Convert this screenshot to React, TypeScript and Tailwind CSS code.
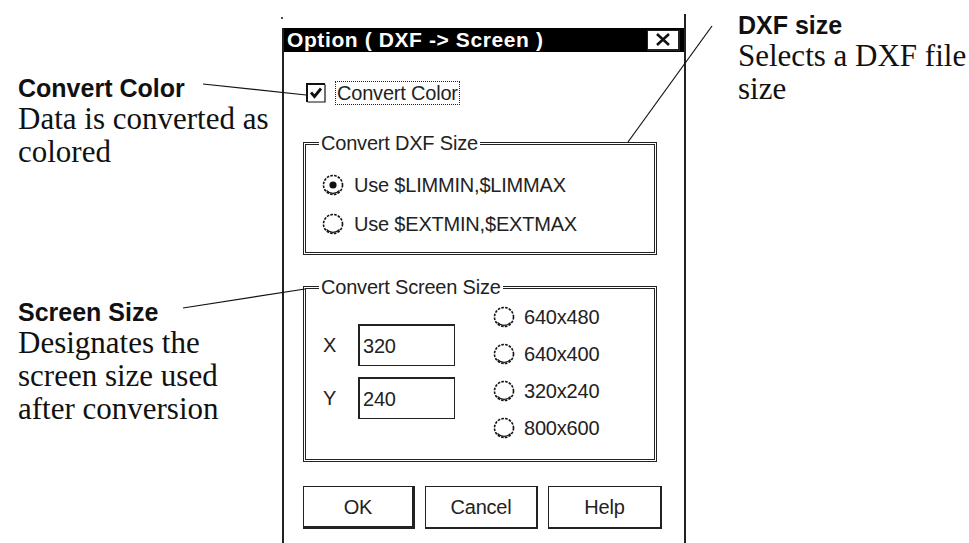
const sans = { fontFamily: '"Liberation Sans", Arial, sans-serif' };
const serif = { fontFamily: '"Liberation Serif", "Times New Roman", serif' };

function Radio({ on = false }: { on?: boolean }) {
  return (
    <svg width="24" height="24" viewBox="0 0 24 24" className="shrink-0">
      <circle cx="12" cy="12" r="9.5" fill="none" stroke="#111" strokeWidth="1.6" strokeDasharray="2.6 1.2" />
      <path d="M5.5 17.5 A9 9 0 0 0 18.5 17.5" fill="none" stroke="#111" strokeWidth="1.2" />
      {on && <circle cx="12" cy="12" r="3.6" fill="#111" />}
    </svg>
  );
}

function Check() {
  return (
    <svg width="20" height="20" viewBox="0 0 20 20" className="shrink-0">
      <path d="M1 19 V1 H19" fill="none" stroke="#111" strokeWidth="2" />
      <path d="M1.5 19 H19 V1.5" fill="none" stroke="#111" strokeWidth="1.2" />
      <path d="M5 9.5 L8.5 13.5 L15 5.5" fill="none" stroke="#111" strokeWidth="2.8" />
    </svg>
  );
}

function Group({ label, className, children }: { label: string; className: string; children: React.ReactNode }) {
  return (
    <div className={`relative border-[3px] border-double border-[#222] ${className}`}>
      <span className="absolute -top-[13px] left-[13px] bg-white px-[2px] text-[20px] leading-[22px] tracking-[-0.2px] text-[#222]">
        {label}
      </span>
      {children}
    </div>
  );
}

function Field({ value }: { value: string }) {
  return (
    <div className="flex h-[42px] w-[97px] items-center border-t-2 border-l-2 border-r border-b border-[#222] pl-[3px] text-[20px]">
      {value}
    </div>
  );
}

function Btn({ label, w, strong = false }: { label: string; w: string; strong?: boolean }) {
  return (
    <div
      className={`flex h-[43px] items-center justify-center border border-[#222] text-[20px] ${w} ${
        strong ? "border-r-[3px] border-b-[3px]" : "border-r-2 border-b-2"
      }`}
    >
      {label}
    </div>
  );
}

export default function App() {
  const sizes = ["640x480", "640x400", "320x240", "800x600"];
  return (
    <div className="relative flex h-[543px] w-[969px] overflow-hidden bg-white text-[#111]">
      {/* left callouts */}
      <div className="flex w-[282px] shrink-0 flex-col pl-[18px]">
        <div className="mt-[74px]">
          <div style={sans} className="text-[25px] font-bold leading-[28px]">Convert Color</div>
          <div style={serif} className="text-[31px] leading-[33px]">
            Data is converted as
            <br />
            colored
          </div>
        </div>
        <div className="mt-[130px]">
          <div style={sans} className="text-[25px] font-bold leading-[28px]">Screen Size</div>
          <div style={serif} className="text-[31px] leading-[33px]">
            Designates the
            <br />
            screen size used
            <br />
            after conversion
          </div>
        </div>
      </div>

      {/* dialog */}
      <div style={sans} className="flex w-[404px] shrink-0 flex-col pt-[14px] text-[#222]">
        <div className="h-[14px] border-r-2 border-[#222]" />
        <div className="flex flex-1 flex-col border-x-2 border-[#222]">
          <div className="flex h-[24px] items-center justify-between bg-black pl-[3px] pr-[4px]">
            <span className="text-[21px] font-bold leading-[24px] tracking-[0.6px] text-white">Option ( DXF -&gt; Screen )</span>
            <div className="flex h-[21px] w-[33px] items-center justify-center border-t border-l border-r-2 border-b-2 border-[#222] bg-white">
              <svg width="16" height="13" viewBox="0 0 16 13">
                <path d="M2 1 L14 12 M14 1 L2 12" stroke="#111" strokeWidth="2.6" />
              </svg>
            </div>
          </div>

          <div className="flex flex-col pl-[19px] tracking-[-0.2px]">
            <div className="mt-[29px] flex h-[24px] items-center gap-[9px] pl-[3px]">
              <Check />
              <span className="border border-dotted border-[#222] px-[1px] text-[20px] leading-[22px]">Convert Color</span>
            </div>

            <Group label="Convert DXF Size" className="mt-[37px] h-[113px] w-[354px]">
              <div className="flex flex-col gap-[9px] pl-[15px] pt-[25px]">
                <div className="flex h-[30px] items-center gap-[9px]">
                  <Radio on />
                  <span className="text-[20px]">Use $LIMMIN,$LIMMAX</span>
                </div>
                <div className="flex h-[30px] items-center gap-[9px]">
                  <Radio />
                  <span className="text-[20px]">Use $EXTMIN,$EXTMAX</span>
                </div>
              </div>
            </Group>

            <Group label="Convert Screen Size" className="mt-[31px] h-[176px] w-[354px]">
              <div className="flex pl-[17px]">
                <div className="mt-[35px] flex flex-col gap-[11px]">
                  <div className="flex items-center">
                    <span className="w-[35px] text-[20px]">X</span>
                    <Field value="320" />
                  </div>
                  <div className="flex items-center">
                    <span className="w-[35px] text-[20px]">Y</span>
                    <Field value="240" />
                  </div>
                </div>
                <div className="ml-[37px] flex flex-col gap-[7px] pt-[13px]">
                  {sizes.map((s) => (
                    <div key={s} className="flex h-[30px] items-center gap-[8px]">
                      <Radio />
                      <span className="text-[20px]">{s}</span>
                    </div>
                  ))}
                </div>
              </div>
            </Group>

            <div className="mt-[24px] flex gap-[10px]">
              <Btn label="OK" w="w-[112px]" strong />
              <Btn label="Cancel" w="w-[113px]" />
              <Btn label="Help" w="w-[114px]" />
            </div>
          </div>
        </div>
      </div>

      {/* right callout */}
      <div className="pl-[52px] pt-[11px]">
        <div style={sans} className="text-[25px] font-bold leading-[28px]">DXF size</div>
        <div style={serif} className="text-[31px] leading-[33px]">
          Selects a DXF file
          <br />
          size
        </div>
      </div>

      {/* leader lines */}
      <svg className="pointer-events-none absolute inset-0" width="969" height="543">
        <line x1="203" y1="84" x2="306" y2="95" stroke="#111" strokeWidth="1.2" />
        <line x1="712" y1="26" x2="628" y2="142" stroke="#111" strokeWidth="1.2" />
        <line x1="183" y1="308" x2="305" y2="289" stroke="#111" strokeWidth="1.2" />
        <circle cx="282" cy="18" r="1" fill="#111" />
      </svg>
    </div>
  );
}
